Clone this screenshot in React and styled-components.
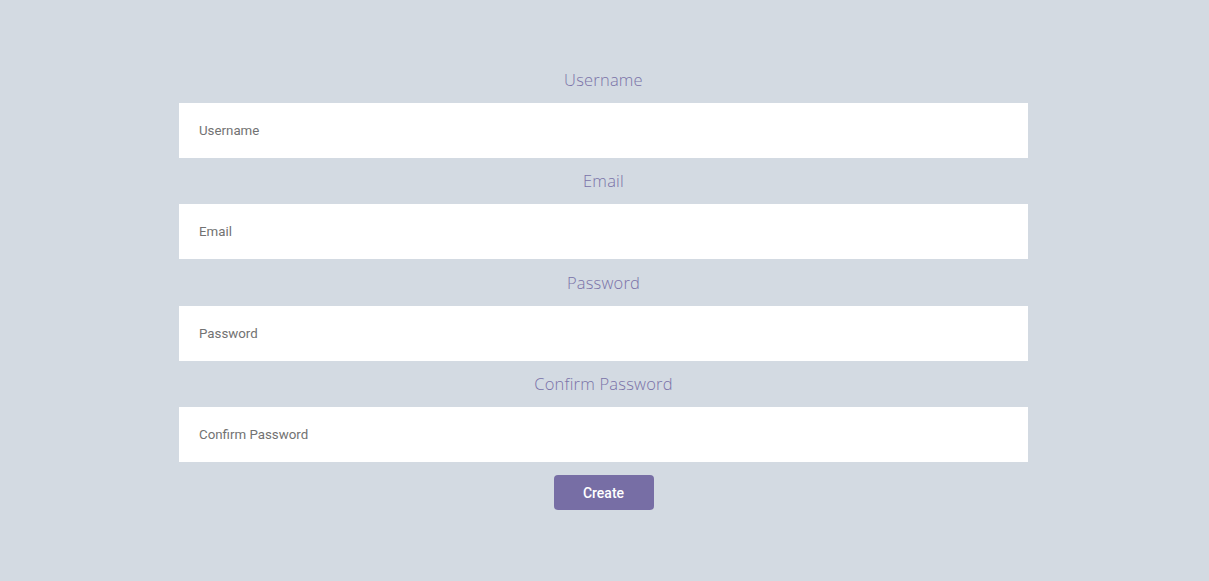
import React from "react";
import styled, { createGlobalStyle } from "styled-components";

const colors = {
  page: "#d3dae2",
  accent: "#776ea5",
  label: "#7a72a8",
  placeholder: "#727272",
  white: "#ffffff",
};

const GlobalStyle = createGlobalStyle`
  html, body {
    margin: 0;
    padding: 0;
    background: ${colors.page};
    height: 100%;
  }
  #root {
    min-height: 100vh;
  }
`;

const Page = styled.div`
  min-height: 100vh;
  padding: 56.7px 2px 0 0;
  box-sizing: border-box;
`;

const Form = styled.form`
  width: 849px;
  margin: 0 auto;
  display: flex;
  flex-direction: column;
  align-items: center;
`;

const Label = styled.label`
  width: 100%;
  height: 46.33px;
  display: flex;
  align-items: center;
  justify-content: center;
  padding-bottom: 1px;
  box-sizing: border-box;
  font-family: "Open Sans", "Liberation Sans", sans-serif;
  font-size: 16.5px;
  font-weight: 300;
  letter-spacing: 0.2px;
  color: ${colors.label};
`;

const Input = styled.input`
  width: 100%;
  height: 55px;
  box-sizing: border-box;
  border: none;
  outline: none;
  padding: 0 20px;
  background: ${colors.white};
  font-family: Roboto, "Liberation Sans", sans-serif;
  font-size: 13.3px;
  color: #333;

  &::placeholder {
    color: ${colors.placeholder};
  }
`;

const Button = styled.button`
  margin-top: 13px;
  width: 100px;
  height: 35px;
  border: none;
  border-radius: 4px;
  background: ${colors.accent};
  color: ${colors.white};
  font-family: Roboto, "Liberation Sans", sans-serif;
  font-size: 14px;
  font-weight: 500;
  cursor: pointer;
`;

const fields = [
  { name: "username", label: "Username", type: "text" },
  { name: "email", label: "Email", type: "email" },
  { name: "password", label: "Password", type: "password" },
  { name: "confirm", label: "Confirm Password", type: "password" },
];

export default function App() {
  return (
    <>
      <GlobalStyle />
      <Page>
        <Form onSubmit={(e) => e.preventDefault()}>
          {fields.map((f) => (
            <React.Fragment key={f.name}>
              <Label htmlFor={f.name}>{f.label}</Label>
              <Input id={f.name} type={f.type} placeholder={f.label} />
            </React.Fragment>
          ))}
          <Button type="submit">Create</Button>
        </Form>
      </Page>
    </>
  );
}
